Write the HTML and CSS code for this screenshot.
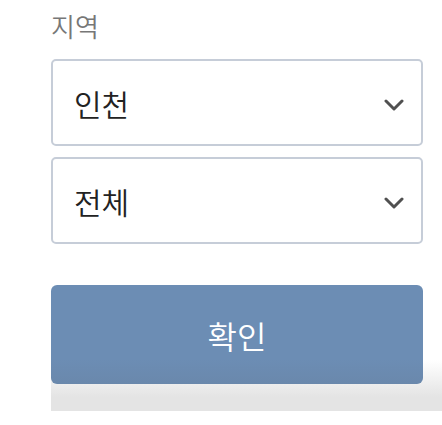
FILE: index.html
```html
<!DOCTYPE html>
<html lang="ko">
<head>
  <meta charset="UTF-8">
  <title>지역 선택</title>
  <link rel="stylesheet" href="styles.css">
</head>
<body>
  <div class="form">
    <div class="label">지역</div>

    <div class="fields">
      <div class="select">
        <span class="value">인천</span>
        <svg class="chevron" width="20" height="12" viewBox="0 0 20 12">
          <path d="M2 2 L10 10 L18 2" fill="none" stroke="#505050" stroke-width="3" stroke-linecap="round" stroke-linejoin="round"/>
        </svg>
      </div>
      <div class="select">
        <span class="value">전체</span>
        <svg class="chevron" width="20" height="12" viewBox="0 0 20 12">
          <path d="M2 2 L10 10 L18 2" fill="none" stroke="#505050" stroke-width="3" stroke-linecap="round" stroke-linejoin="round"/>
        </svg>
      </div>
    </div>

    <div class="submit-bar">
      <button class="submit">확인</button>
    </div>
  </div>
</body>
</html>
```

FILE: styles.css
```css
body {
  margin: 0;
  font-family: "Noto Sans CJK KR", "Noto Sans", sans-serif;
  font-weight: 350;
  background: #fff;
}

.form {
  padding: 7px 0 0 51px;
}

.label {
  font-size: 26px;
  line-height: 38px;
  color: #777;
  margin-bottom: 14px;
}

.fields {
  display: flex;
  flex-direction: column;
  gap: 11px;
  width: 372px;
}

.select {
  box-sizing: border-box;
  height: 87px;
  display: flex;
  align-items: center;
  justify-content: space-between;
  padding: 0 17px 0 21px;
  border: 2px solid #c6cdd8;
  border-radius: 5px;
}

.value {
  font-size: 30px;
  color: #222;
}

.chevron {
  display: block;
  margin-top: 4px;
}

.submit-bar {
  margin-top: 41px;
  height: 126px;
  background: linear-gradient(to bottom, #fff 0, #fff 75px, #e4e4e4 112px, #e4e4e4 100%);
}

.submit {
  display: block;
  width: 372px;
  height: 99px;
  border: none;
  border-radius: 6px;
  background: linear-gradient(to bottom, #6c8db4 0, #6c8db4 75%, #6a88ac 100%);
  color: #fff;
  font-family: inherit;
  font-weight: 350;
  font-size: 32px;
  cursor: pointer;
}
```
